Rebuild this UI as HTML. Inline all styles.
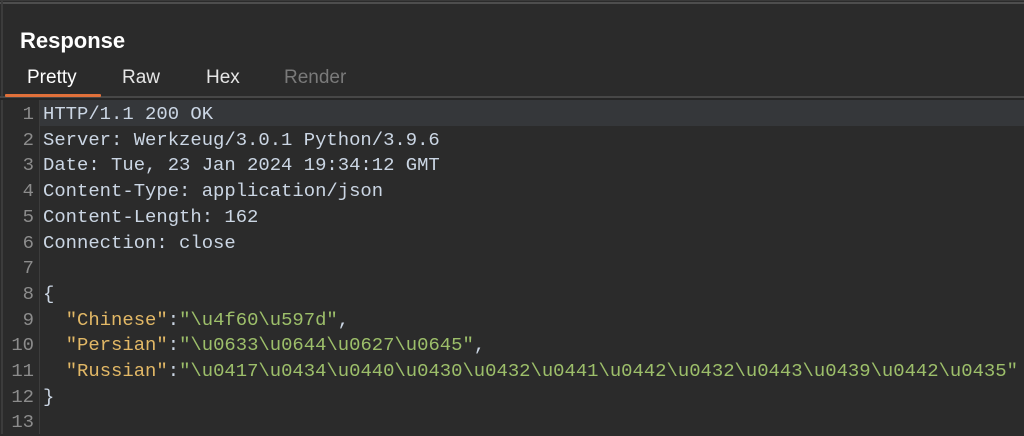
<!DOCTYPE html>
<html><head><meta charset="utf-8"><style>
html,body{margin:0;padding:0;width:1024px;height:434px;overflow:hidden;background:#2b2b2b;}
.top{position:absolute;left:0;top:0;width:1024px;height:3px;background:#2b2b2b;border-top:1px solid #3a3a3a;}
.top i{position:absolute;left:0;top:1px;width:1024px;height:2px;background:#4e4e4e;}
.lb{position:absolute;left:1px;top:0;width:2px;height:434px;background:#3c3c3c;}
.title{position:absolute;left:20px;top:28px;font:bold 22px "Liberation Sans",sans-serif;color:#fff;}
.tab{position:absolute;top:67px;font:19px "Liberation Sans",sans-serif;color:#e6e6e6;}
.ul{position:absolute;left:5px;top:94px;width:96px;height:3px;background:#e0703a;border-radius:1px;}
.sep{position:absolute;left:0;top:96px;width:1024px;height:2px;background:#474747;}
.sep2{position:absolute;left:0;top:98px;width:1024px;height:2px;background:#262626;}
.hl{position:absolute;left:40px;top:100px;width:984px;height:26px;background:#35373a;}
.gut{position:absolute;left:39px;top:100px;width:1px;height:334px;background:#3d3d3d;}
.code{position:absolute;left:0;top:102px;font:18.9px/25.7px "Liberation Mono",monospace;color:#cbd6e4;white-space:pre;}
.ln{display:inline-block;width:34px;text-align:right;color:#8c8c8c;margin-right:9px;}
.k{color:#e2b866}.s{color:#9dbf6a}
</style></head><body>
<div class="top"><i></i></div><div class="lb"></div>
<div class="title">Response</div>
<div class="tab" style="left:27px;color:#fff">Pretty</div>
<div class="tab" style="left:122px">Raw</div>
<div class="tab" style="left:206px">Hex</div>
<div class="tab" style="left:284px;color:#7a7a7a">Render</div>
<div class="sep"></div><div class="sep2"></div><div class="ul"></div>
<div class="hl"></div><div class="gut"></div>
<div class="code"><span class="ln">1</span>HTTP/1.1 200 OK
<span class="ln">2</span>Server: Werkzeug/3.0.1 Python/3.9.6
<span class="ln">3</span>Date: Tue, 23 Jan 2024 19:34:12 GMT
<span class="ln">4</span>Content-Type: application/json
<span class="ln">5</span>Content-Length: 162
<span class="ln">6</span>Connection: close
<span class="ln">7</span>
<span class="ln">8</span>{
<span class="ln">9</span>  <span class="k">"Chinese"</span>:<span class="s">"\u4f60\u597d"</span>,
<span class="ln">10</span>  <span class="k">"Persian"</span>:<span class="s">"\u0633\u0644\u0627\u0645"</span>,
<span class="ln">11</span>  <span class="k">"Russian"</span>:<span class="s">"\u0417\u0434\u0440\u0430\u0432\u0441\u0442\u0432\u0443\u0439\u0442\u0435"</span>
<span class="ln">12</span>}
<span class="ln">13</span></div>
</body></html>
